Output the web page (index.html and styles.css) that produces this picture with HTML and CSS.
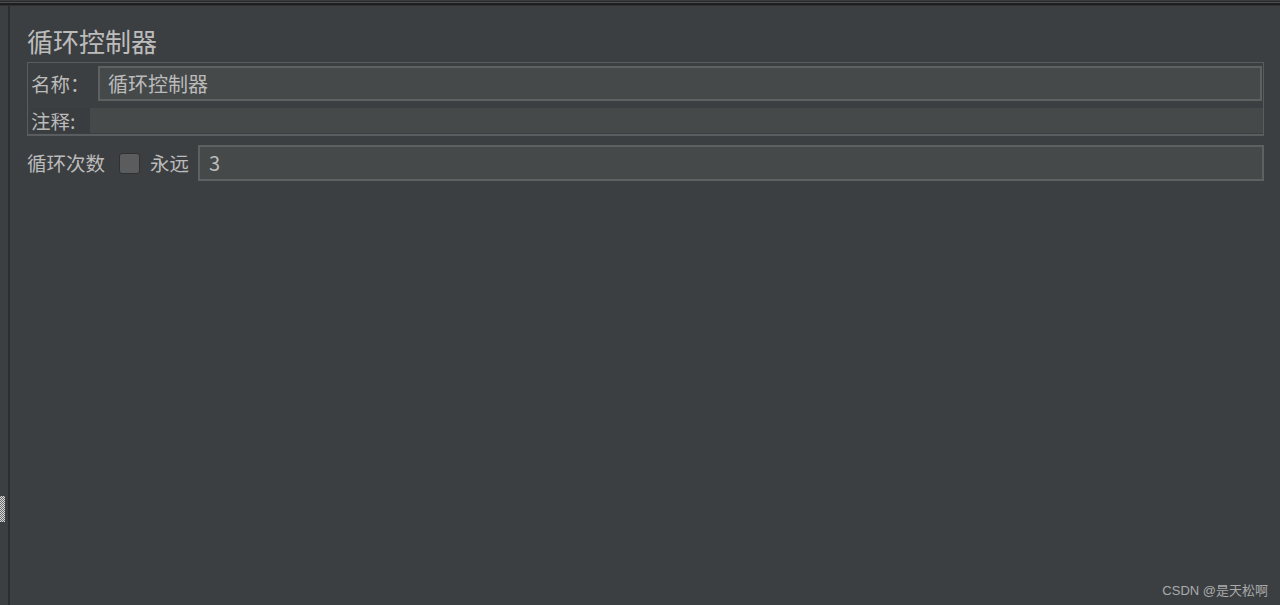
FILE: index.html
```html
<!DOCTYPE html>
<html lang="zh">
<head>
<meta charset="utf-8">
<title>循环控制器</title>
<link rel="stylesheet" href="styles.css">
</head>
<body>
<div class="topbar"></div>
<div class="frame">
  <div class="side"><div class="grip"></div></div>
  <main class="main">
    <h1 class="title">循环控制器</h1>
    <section class="panel">
      <div class="row row-name">
        <label class="label label-name">名称：</label>
        <div class="field field-name">循环控制器</div>
      </div>
      <div class="row row-comment">
        <label class="label label-comment">注释:</label>
        <div class="field field-comment"></div>
      </div>
    </section>
    <div class="loop">
      <span class="label loop-label">循环次数</span>
      <span class="checkbox"></span>
      <span class="label forever">永远</span>
      <div class="field field-count">3</div>
    </div>
  </main>
</div>
<div class="watermark">CSDN @是天松啊</div>
</body>
</html>
```

FILE: styles.css
```css
html, body {
  margin: 0;
  padding: 0;
  width: 1280px;
  height: 605px;
  overflow: hidden;
  background: #3c3f41;
  font-family: "Noto Sans CJK SC", "Noto Sans", "Liberation Sans", sans-serif;
  color: #bbbbbb;
}

.topbar {
  height: 6px;
  background: linear-gradient(to bottom,
    #3a3c3e 0 1px,
    #27292a 1px 2px,
    #4d5052 2px 3px,
    #1d1e1f 3px 5px,
    #2e3031 5px 6px);
}

.frame {
  display: flex;
  height: 599px;
  position: relative;
}

.side {
  width: 8px;
  border-right: 2px solid #2b2d2e;
  background: #3c3f41;
  position: relative;
}

.grip {
  position: absolute;
  left: 0;
  top: 490px;
  width: 5px;
  height: 26px;
  background: repeating-conic-gradient(#d8d8d8 0 25%, #6a6a6a 0 50%) 0 0 / 2px 2px;
}

.main {
  flex: 1;
  padding: 0 16px 0 17px;
}

.title {
  margin: 0;
  padding-top: 18px;
  height: 38px;
  font-size: 26px;
  font-weight: normal;
  line-height: 34px;
  color: #bcbcbc;
}

.panel {
  border: 1px solid #5a5d5f;
  border-bottom-width: 2px;
  box-sizing: border-box;
  height: 74px;
  padding: 3px 1px 0 3px;
  display: flex;
  flex-direction: column;
}

.row {
  display: flex;
  align-items: center;
}

.label {
  font-size: 19.5px;
  line-height: 24px;
  white-space: nowrap;
}

.label-name { width: 67px; }
.label-comment { width: 59px; }

.field {
  box-sizing: border-box;
  background: #45494a;
  font-size: 20px;
  color: #bbbbbb;
}

.row-name { height: 35px; }

.field-name {
  flex: 1;
  height: 35px;
  border: 2px solid #5e6162;
  padding: 0 8px;
  line-height: 31px;
}

.row-comment {
  margin-top: 7px;
  height: 25px;
  background: #3a3d3f;
}

.field-comment {
  flex: 1;
  height: 25px;
  margin-right: -1px;
}

.loop {
  margin-top: 9px;
  display: flex;
  align-items: center;
  height: 36px;
}

.loop-label { width: 92px; }

.checkbox {
  width: 19px;
  height: 19px;
  border: 1px solid #2f3132;
  border-radius: 3px;
  background: #5a5c5e;
  margin-right: 10px;
}

.forever { width: 48px; }

.field-count {
  flex: 1;
  height: 36px;
  border: 2px solid #5e6162;
  padding: 0 9px;
  line-height: 32px;
}

.watermark {
  position: absolute;
  right: 12px;
  bottom: 6px;
  font-family: "Liberation Sans", "Noto Sans CJK SC", sans-serif;
  font-size: 13px;
  color: #a9abac;
}
```
